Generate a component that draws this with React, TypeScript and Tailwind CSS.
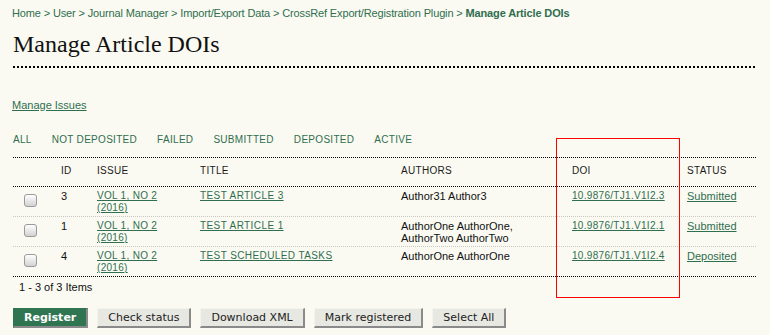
import React from 'react';

const rows = [
  { id: '3', title: 'TEST ARTICLE 3', authors: ['Author31 Author3'], doi: '10.9876/TJ1.V1I2.3', status: 'Submitted' },
  { id: '1', title: 'TEST ARTICLE 1', authors: ['AuthorOne AuthorOne,', 'AuthorTwo AuthorTwo'], doi: '10.9876/TJ1.V1I2.1', status: 'Submitted' },
  { id: '4', title: 'TEST SCHEDULED TASKS', authors: ['AuthorOne AuthorOne'], doi: '10.9876/TJ1.V1I2.4', status: 'Deposited' },
];

const filters = ['ALL', 'NOT DEPOSITED', 'FAILED', 'SUBMITTED', 'DEPOSITED', 'ACTIVE'];

const cols = 'grid grid-cols-[48px_36px_103px_201px_171px_115px_1fr]';

function Crumb({ children }: { children: React.ReactNode }) {
  return (
    <>
      <a className="text-[#2f6e4f]">{children}</a>
      <span className="text-[#2f6e4f]"> &gt; </span>
    </>
  );
}

export default function App() {
  return (
    <div className="relative h-[335px] w-[770px] overflow-hidden bg-[#fafaf2] px-[13px] font-['Liberation_Sans',Arial,sans-serif] text-[#111]">
      <div className="-ml-[1px] pt-[6px] text-[11px] leading-[14px] tracking-[-0.14px]">
        <Crumb>Home</Crumb>
        <Crumb>User</Crumb>
        <Crumb>Journal Manager</Crumb>
        <Crumb>Import/Export Data</Crumb>
        <Crumb>CrossRef Export/Registration Plugin</Crumb>
        <a className="font-bold text-[#2f6e4f]">Manage Article DOIs</a>
      </div>

      <h1 className="mt-[10px] font-['Liberation_Serif','Times_New_Roman',serif] text-[24px] leading-[28px] text-[#111]">
        Manage Article DOIs
      </h1>
      <div className="mt-[8px] w-[742px] border-t-2 border-dotted border-black" />

      <div className="mt-[30px] -ml-[1px] text-[11px] leading-[14px]">
        <a className="text-[#2f6e4f] underline">Manage Issues</a>
      </div>

      <div className="mt-[22px] flex gap-[20px] text-[10px] leading-[12px] tracking-[0.3px] text-[#2f6e4f]">
        {filters.map((f) => (
          <a key={f}>{f}</a>
        ))}
      </div>

      <div className="mt-[11px] w-[743px] border-t border-dotted border-black">
        <div className={`${cols} border-b border-dotted border-black pt-[7px] pb-[9px] text-[10px] leading-[12px] tracking-[0.3px] text-[#1a1a1a]`}>
          <div />
          <div>ID</div>
          <div>ISSUE</div>
          <div>TITLE</div>
          <div>AUTHORS</div>
          <div>DOI</div>
          <div>STATUS</div>
        </div>

        {rows.map((r, i) => (
          <div
            key={r.id}
            className={`${cols} pt-[3px] pb-[2px] text-[11px] leading-[12px] border-b border-dotted ${
              i === rows.length - 1 ? 'border-black' : 'border-[#c8c8c0]'
            }`}
          >
            <div className="pl-[11px] pt-[4px]">
              <input
                type="checkbox"
                className="block h-[13px] w-[13px] appearance-none rounded-[3px] border border-[#9a9a9a] bg-gradient-to-b from-white to-[#d2d2d2]"
              />
            </div>
            <div>{r.id}</div>
            <div className="text-[10px] tracking-[0.3px] text-[#2f6e4f]">
              <a className="underline">VOL 1, NO 2</a>
              <br />
              <a className="underline">(2016)</a>
            </div>
            <div className="text-[10px] tracking-[0.4px] text-[#2f6e4f]">
              <a className="underline">{r.title}</a>
            </div>
            <div>
              {r.authors.map((a) => (
                <div key={a}>{a}</div>
              ))}
            </div>
            <div className="text-[10px] tracking-[0.3px] text-[#2f6e4f]">
              <a className="underline">{r.doi}</a>
            </div>
            <div className="text-[#2f6e4f]">
              <a className="underline">{r.status}</a>
            </div>
          </div>
        ))}
      </div>

      <div className="pl-[6px] pt-[3px] text-[11px] leading-[14px]">1 - 3 of 3 Items</div>

      <div className="mt-[14px] flex gap-[9px] font-['DejaVu_Sans',Verdana,sans-serif] text-[11px] leading-[15px]">
        <button className="border-t border-l border-b-2 border-r-2 border-t-[#2f7551] border-l-[#2f7551] border-b-[#8a8a8a] border-r-[#8a8a8a] bg-[#2f7551] px-[10px] pt-[1px] pb-[1px] font-bold text-white">
          Register
        </button>
        {['Check status', 'Download XML', 'Mark registered', 'Select All'].map((b) => (
          <button
            key={b}
            className="border-t border-l border-b-2 border-r-2 border-t-[#f4f4ee] border-l-[#f4f4ee] border-b-[#8a8a8a] border-r-[#8a8a8a] bg-[#e8e8e2] px-[10px] pt-[1px] pb-[1px] text-[#222]"
          >
            {b}
          </button>
        ))}
      </div>

      <div className="pointer-events-none absolute left-[556px] top-[138px] h-[160px] w-[124px] border border-[#ff0000]" />
    </div>
  );
}
